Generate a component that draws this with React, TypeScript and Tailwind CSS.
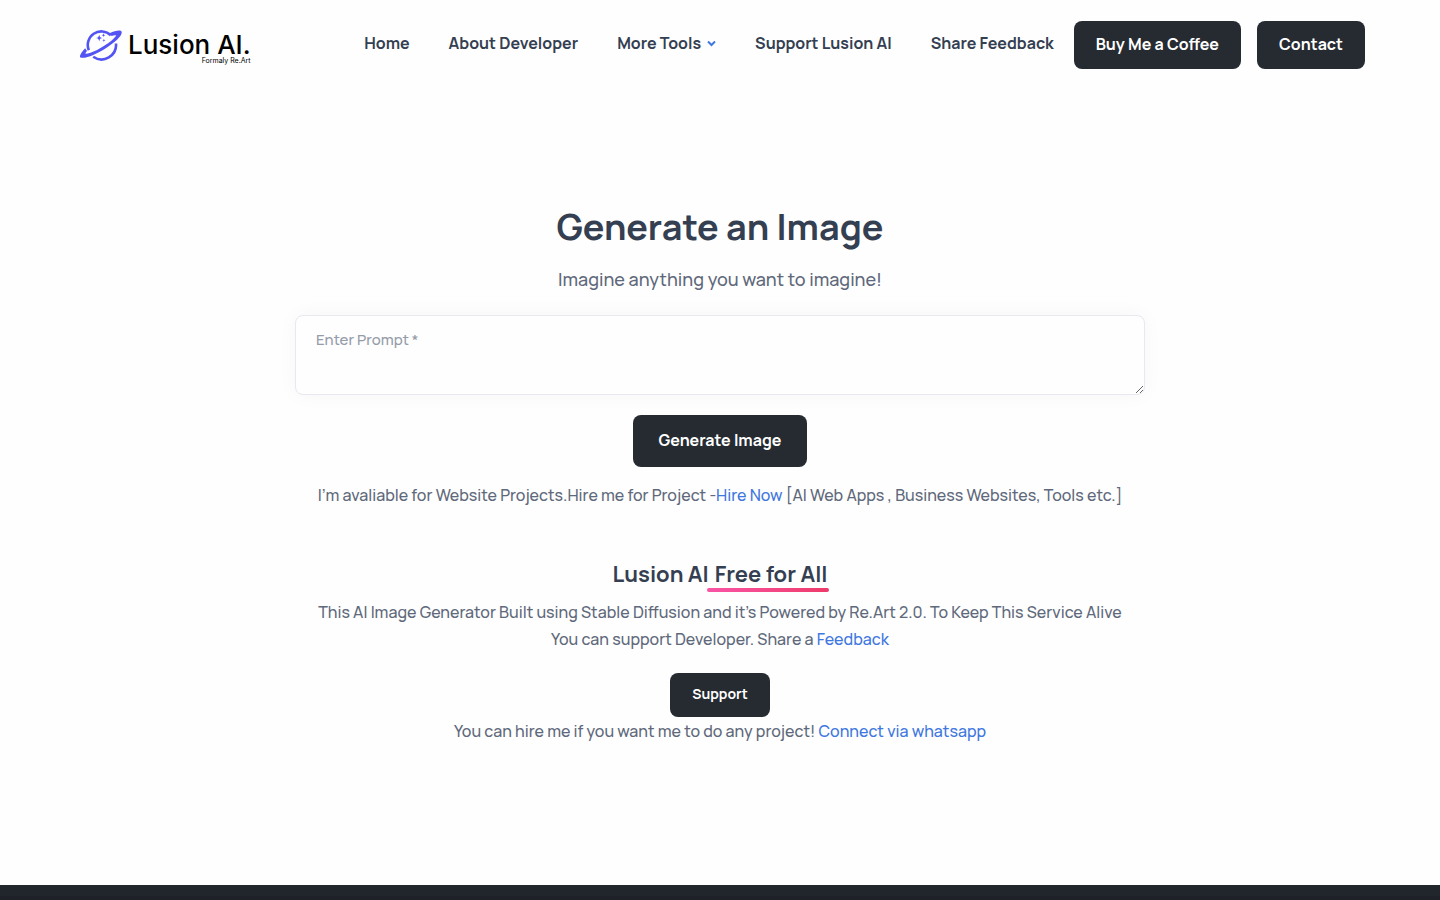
import React from "react";

const navLink = "whitespace-nowrap hover:text-[#3f78e0]";
const darkButton = "rounded-lg bg-[#262b32] pb-0.5 font-bold text-white hover:bg-[#343f52]";
const textLink = "text-[#3f78e0] hover:underline";

function Logo() {
  return (
    <a href="#home" aria-label="Lusion AI home" className="flex shrink-0 items-center text-black">
      <svg width="42" height="34" viewBox="0 0 42 34" fill="none" aria-hidden="true">
        <path
          d="M8.8 22.2A13.6 13.6 0 0 1 30.8 7.2M36 15.5A14.6 14.6 0 0 1 13.2 28.8"
          stroke="#5454f5"
          strokeWidth="2.6"
        />
        <path
          d="M29.5 5.2C35 2.7 40.5 1.7 41.5 3.4C43.3 7.1 34.8 14.5 25.8 20.2C15.7 26.5 4.8 31.5 0 29.3C-.6 27.1 2 23.4 5.2 20.2L7 23C5.8 24.3 5.3 25.3 5.6 25.7C8.3 26.5 17.1 22.4 24.2 17.8C29.6 14.4 34 10.7 36.3 7.4C35.2 6.8 33.2 7.3 31.5 8Z"
          fill="#5454f5"
        />
        <path
          d="M19.2 6.5C19.6 9.1 20.1 9.6 22.6 10C20.1 10.4 19.6 10.9 19.2 13.5C18.8 10.9 18.3 10.4 15.8 10C18.3 9.6 18.8 9.1 19.2 6.5ZM23.5 5.3L24 6.7L25.4 7.2L24 7.7L23.5 9.1L23 7.7L21.6 7.2L23 6.7ZM23.9 10.6L24.3 12L25.6 12.4L24.3 12.8L23.9 14.2L23.5 12.8L22.2 12.4L23.5 12Z"
          fill="#5454f5"
        />
      </svg>
      <span className="ml-1.5 flex flex-col items-end whitespace-nowrap pt-2 font-['Inter',sans-serif]">
        <span className="text-[26px] font-medium leading-6">Lusion AI.</span>
        <span className="text-[7px] font-normal leading-2">Formaly Re.Art</span>
      </span>
    </a>
  );
}

function Header() {
  return (
    <header className="flex items-center justify-between pt-[21px] pb-5 pl-20 pr-[75px]">
      <Logo />
      <div className="flex items-center gap-5">
        <nav aria-label="Main" className="flex items-center gap-[39px] pb-1 font-bold text-[#343f52]">
          <a href="#home" className={navLink}>Home</a>
          <a href="#about" className={navLink}>About Developer</a>
          <button type="button" className="flex items-center gap-1.5 whitespace-nowrap hover:text-[#3f78e0]">
            More Tools
            <svg width="9" height="7" viewBox="0 0 9 7" fill="none" aria-hidden="true">
              <path d="M1 1.5L4.5 5L8 1.5" stroke="#3f78e0" strokeWidth="2" />
            </svg>
          </button>
          <a href="#support" className={navLink}>Support Lusion AI</a>
          <a href="#feedback" className={navLink}>Share Feedback</a>
        </nav>
        <div className="flex gap-4">
          <a href="#coffee" className={`${darkButton} flex h-12 items-center whitespace-nowrap px-[22px]`}>
            Buy Me a Coffee
          </a>
          <a href="#contact" className={`${darkButton} flex h-12 items-center px-[22px]`}>
            Contact
          </a>
        </div>
      </div>
    </header>
  );
}

export default function App() {
  return (
    <div className="flex min-h-screen flex-col bg-[#fefefe] font-['Manrope','Inter',sans-serif] text-base font-medium text-[#60697b]">
      <Header />
      <main className="mx-auto flex w-full max-w-[850px] grow flex-col items-center pt-28 pb-32 text-center">
        <h1 className="text-[36px] font-bold leading-[52px] text-[#343f52]">Generate an Image</h1>
        <p className="mt-3 text-lg leading-7">Imagine anything you want to imagine!</p>
        <form className="mt-[22px] flex w-full flex-col items-center" onSubmit={(e) => e.preventDefault()}>
          <textarea
            aria-label="Enter Prompt"
            placeholder="Enter Prompt *"
            className="block h-20 w-full resize-y rounded-lg border border-[#e8e8f0] bg-[#fefefe] px-5 py-3 text-[15px] leading-6 text-[#60697b] shadow-[0_0_20px_rgba(30,34,40,0.04)] outline-none placeholder:text-[#959ca9] focus:border-[#9fbcf0]"
          />
          <button type="submit" className={`${darkButton} mt-5 h-[52px] px-[26px]`}>
            Generate Image
          </button>
        </form>
        <p className="mt-[14px] leading-7">
          I’m avaliable for Website Projects.Hire me for Project -
          <a href="#hire" className={textLink}>Hire Now</a> [AI Web Apps , Business Websites, Tools etc.]
        </p>
        <h2 className="mt-12 flex text-[22px] font-bold leading-[34px] text-[#343f52]">
          Lusion AI
          <span className="relative pl-1.5 after:absolute after:-inset-x-0.5 after:-bottom-px after:h-1 after:rounded-full after:bg-linear-to-r after:from-[#f953a5] after:to-[#ee3a6a]">
            Free for All
          </span>
        </h2>
        <p className="mt-2 px-2 leading-[27px]">
          This AI Image Generator Built using Stable Diffusion and it’s Powered by Re.Art 2.0. To Keep This Service
          Alive You can support Developer. Share a <a href="#feedback" className={textLink}>Feedback</a>
        </p>
        <a href="#support" className={`${darkButton} mt-5 flex h-11 items-center px-[22px] text-sm`}>
          Support
        </a>
        <p className="leading-7">
          You can hire me if you want me to do any project!{" "}
          <a href="#whatsapp" className={textLink}>Connect via whatsapp</a>
        </p>
      </main>
      <footer className="h-[15px] border-b-4 border-[#1e2228] bg-[#21262c]" />
    </div>
  );
}
